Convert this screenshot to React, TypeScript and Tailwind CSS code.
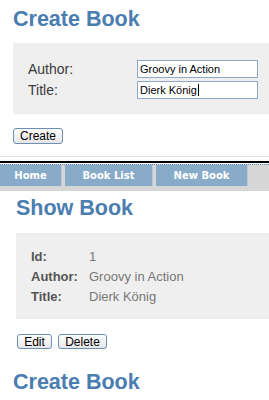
import React from "react";

const heading =
  "font-['Liberation_Sans',Arial,sans-serif] font-bold text-[21.5px] leading-[26px] text-[#4a7db0]";

function XpButton({ label, className }: { label: string; className?: string }) {
  return (
    <div
      className={
        "flex h-[15px] items-center justify-center rounded-[3px] border border-[#6d8fb6] bg-gradient-to-b from-white to-[#e6e6e6] text-[12px] leading-none text-black " +
        (className || "")
      }
    >
      {label}
    </div>
  );
}

function Field({ value, caret }: { value: string; caret?: boolean }) {
  return (
    <div className="flex h-[18px] w-[121px] items-center border border-[#8ea8c6] bg-white pl-[2px] text-[11px] text-black">
      <span>{value}</span>
      {caret && <span className="ml-[1px] h-[12px] w-[1px] bg-black" />}
    </div>
  );
}

export default function App() {
  const tabs = [
    { label: "Home", w: "w-[62px]" },
    { label: "Book List", w: "w-[88px]" },
    { label: "New Book", w: "w-[92px]" },
  ];

  const details = [
    { label: "Id:", value: "1" },
    { label: "Author:", value: "Groovy in Action" },
    { label: "Title:", value: "Dierk König" },
  ];

  return (
    <div className="h-[400px] w-[269px] overflow-hidden bg-white font-['Liberation_Sans',Arial,sans-serif]">
      {/* create form */}
      <h1 className={heading + " ml-[13px] pt-[6px]"}>Create Book</h1>

      <div className="ml-[13px] mt-[11px] flex flex-col gap-[3px] bg-[#efefef] pb-[15px] pl-[15px] pt-[17px]">
        <div className="flex h-[18px] items-center">
          <span className="w-[109px] text-[14px] text-[#3a3a3a]">Author:</span>
          <Field value="Groovy in Action" />
        </div>
        <div className="flex h-[18px] items-center">
          <span className="w-[109px] text-[14px] text-[#3a3a3a]">Title:</span>
          <Field value="Dierk König" caret />
        </div>
      </div>

      <div className="ml-[13px] mt-[14px] flex">
        <XpButton label="Create" className="h-[16px] w-[50px]" />
      </div>

      <div className="mt-[12px] h-px bg-[#e4e4e4]" />
      <div className="mt-[4px] h-[2px] bg-black" />

      {/* nav */}
      <div className="mt-[1px] flex h-[27px] flex-col bg-[#d6d6d6]">
        <div className="h-px border-t border-dotted border-[#5d86b0]" />
        <div className="flex h-[21px] gap-[3px]">
          {tabs.map((t) => (
            <div
              key={t.label}
              className={
                t.w +
                " flex items-center justify-center border-r border-[#b9c9d8] bg-[#88abc9] font-['DejaVu_Sans',Verdana,sans-serif] text-[10px] font-bold text-white"
              }
            >
              {t.label}
            </div>
          ))}
        </div>
      </div>

      {/* show */}
      <h1 className={heading + " ml-[16px] mt-[4px]"}>Show Book</h1>

      <div className="ml-[16px] mt-[12px] flex flex-col bg-[#efefef] pb-[12px] pl-[15px] pt-[14px]">
        {details.map((d) => (
          <div key={d.label} className="flex h-[20px] items-center text-[13px]">
            <span className="w-[58px] font-bold text-[#555]">{d.label}</span>
            <span className="text-[#777]">{d.value}</span>
          </div>
        ))}
      </div>

      <div className="ml-[17px] mt-[15px] flex gap-[6px]">
        <XpButton label="Edit" className="w-[35px]" />
        <XpButton label="Delete" className="w-[49px]" />
      </div>

      <h1 className={heading + " ml-[13px] mt-[20px]"}>Create Book</h1>
    </div>
  );
}
